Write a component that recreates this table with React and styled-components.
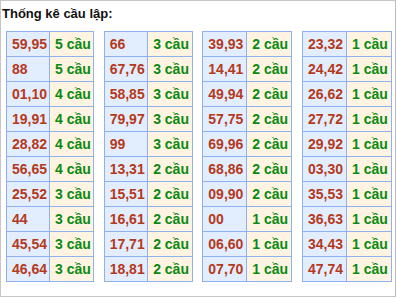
import React from 'react';
import styled, { createGlobalStyle } from 'styled-components';

const Global = createGlobalStyle`
  body {
    margin: 0;
    background: #fff;
    font-family: "Liberation Sans", Arial, sans-serif;
  }
`;

const Box = styled.div`
  width: 396px;
  height: 297px;
  box-sizing: border-box;
  border: 1px solid #c6c6c6;
  border-right-color: #bcbcbc;
`;

const Title = styled.div`
  font-size: 13px;
  font-weight: bold;
  color: #111;
  line-height: 16px;
  padding: 5px 0 0 1px;
  height: 25px;
  box-sizing: border-box;
`;

const Grid = styled.div`
  display: flex;
  justify-content: space-between;
  padding: 5px 3px 0 5px;
`;

const Table = styled.table`
  border-collapse: collapse;
  width: ${(p) => p.$w}px;
  table-layout: fixed;
`;

const Cell = styled.td`
  height: 25px;
  padding: 0 0 0 5px;
  border: 1px solid #8fb2ef;
  font-size: 14px;
  font-weight: bold;
  white-space: nowrap;
  background: ${(p) => (p.$count ? '#fff4e2' : '#e2eefe')};
  color: ${(p) => (p.$count ? '#0a8a12' : '#b5391c')};
  width: ${(p) => (p.$count ? 44 : 43)}px;
  box-sizing: border-box;
`;

const data = [
  [
    ['59,95', 5], ['88', 5], ['01,10', 4], ['19,91', 4], ['28,82', 4],
    ['56,65', 4], ['25,52', 3], ['44', 3], ['45,54', 3], ['46,64', 3],
  ],
  [
    ['66', 3], ['67,76', 3], ['58,85', 3], ['79,97', 3], ['99', 3],
    ['13,31', 2], ['15,51', 2], ['16,61', 2], ['17,71', 2], ['18,81', 2],
  ],
  [
    ['39,93', 2], ['14,41', 2], ['49,94', 2], ['57,75', 2], ['69,96', 2],
    ['68,86', 2], ['09,90', 2], ['00', 1], ['06,60', 1], ['07,70', 1],
  ],
  [
    ['23,32', 1], ['24,42', 1], ['26,62', 1], ['27,72', 1], ['29,92', 1],
    ['03,30', 1], ['35,53', 1], ['36,63', 1], ['34,43', 1], ['47,74', 1],
  ],
];

const widths = [88, 89, 90, 90];

export default function App() {
  return (
    <>
      <Global />
      <Box>
        <Title>Thống kê cầu lập:</Title>
        <Grid>
          {data.map((col, i) => (
            <Table key={i} $w={widths[i]}>
              <tbody>
                {col.map(([pair, n]) => (
                  <tr key={pair}>
                    <Cell>{pair}</Cell>
                    <Cell $count>{n} cầu</Cell>
                  </tr>
                ))}
              </tbody>
            </Table>
          ))}
        </Grid>
      </Box>
    </>
  );
}
